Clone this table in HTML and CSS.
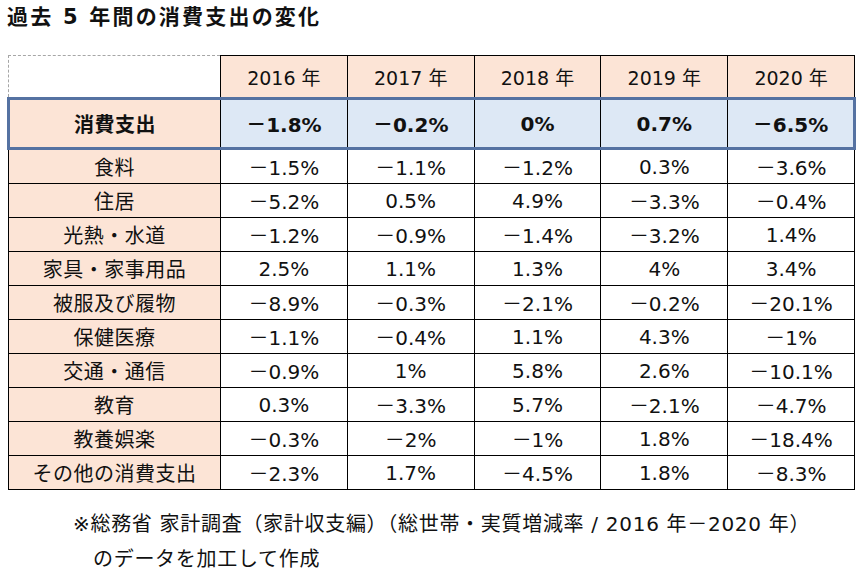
FILE: index.html
```html
<!DOCTYPE html>
<html lang="ja">
<head>
<meta charset="utf-8">
<link rel="stylesheet" href="styles.css">
</head>
<body>
<div class="page">
  <h1 class="title">過去 5 年間の消費支出の変化</h1>
  <table class="data">
    <colgroup>
      <col class="c-label">
      <col class="c-year"><col class="c-year"><col class="c-year"><col class="c-year"><col class="c-year">
    </colgroup>
    <thead>
      <tr class="head">
        <th class="corner"></th>
        <th>2016 年</th><th>2017 年</th><th>2018 年</th><th>2019 年</th><th>2020 年</th>
      </tr>
    </thead>
    <tbody>
      <tr class="total">
        <th>消費支出</th>
        <td>－1.8%</td><td>－0.2%</td><td>0%</td><td>0.7%</td><td>－6.5%</td>
      </tr>
      <tr><th>食料</th><td>－1.5%</td><td>－1.1%</td><td>－1.2%</td><td>0.3%</td><td>－3.6%</td></tr>
      <tr><th>住居</th><td>－5.2%</td><td>0.5%</td><td>4.9%</td><td>－3.3%</td><td>－0.4%</td></tr>
      <tr><th>光熱・水道</th><td>－1.2%</td><td>－0.9%</td><td>－1.4%</td><td>－3.2%</td><td>1.4%</td></tr>
      <tr><th>家具・家事用品</th><td>2.5%</td><td>1.1%</td><td>1.3%</td><td>4%</td><td>3.4%</td></tr>
      <tr><th>被服及び履物</th><td>－8.9%</td><td>－0.3%</td><td>－2.1%</td><td>－0.2%</td><td>－20.1%</td></tr>
      <tr><th>保健医療</th><td>－1.1%</td><td>－0.4%</td><td>1.1%</td><td>4.3%</td><td>－1%</td></tr>
      <tr><th>交通・通信</th><td>－0.9%</td><td>1%</td><td>5.8%</td><td>2.6%</td><td>－10.1%</td></tr>
      <tr><th>教育</th><td>0.3%</td><td>－3.3%</td><td>5.7%</td><td>－2.1%</td><td>－4.7%</td></tr>
      <tr><th>教養娯楽</th><td>－0.3%</td><td>－2%</td><td>－1%</td><td>1.8%</td><td>－18.4%</td></tr>
      <tr><th>その他の消費支出</th><td>－2.3%</td><td>1.7%</td><td>－4.5%</td><td>1.8%</td><td>－8.3%</td></tr>
    </tbody>
  </table>
  <div class="note">
    <p class="note-line">※総務省 家計調査（家計収支編）（総世帯・実質増減率 / 2016 年－2020 年）</p>
    <p class="note-line indent">のデータを加工して作成</p>
  </div>
</div>
</body>
</html>
```

FILE: styles.css
```css
html, body {
  margin: 0;
  padding: 0;
  background: #ffffff;
}

body {
  font-family: "DejaVu Sans", "Noto Sans CJK JP", sans-serif;
  color: #111111;
}

.page {
  width: 863px;
  height: 578px;
  padding: 5px 0 0 7px;
  box-sizing: border-box;
  overflow: hidden;
}

.title {
  margin: 0 0 26px 0;
  font-size: 21px;
  line-height: 24px;
  font-weight: bold;
  letter-spacing: 2.2px;
  color: #111111;
}

.data {
  border-collapse: collapse;
  width: 849px;
  table-layout: fixed;
}

.c-label { width: 212px; }

.data th,
.data td {
  border: 1px solid #000000;
  text-align: center;
  vertical-align: middle;
  padding: 0;
  font-weight: normal;
  font-size: 20px;
  height: 33px;
  white-space: nowrap;
}

.data tbody th {
  background: #fce4d6;
  letter-spacing: 0.5px;
}

.head th {
  background: #fce4d6;
  font-size: 19px;
  height: 41px;
}

.head th.corner {
  background: #ffffff;
  border-top: 1px dashed #a6a6a6;
  border-left: 1px dashed #a6a6a6;
}

.total th,
.total td {
  background: #dde8f5;
  font-weight: bold;
  border-top: 3px solid #5572a2;
  border-bottom: 3px solid #5572a2;
  height: 47px;
}

.total th {
  border-left: 3px solid #5572a2;
}

.total td:last-child {
  border-right: 3px solid #5572a2;
}

.note {
  margin: 17px 0 0 66px;
  font-size: 20px;
  letter-spacing: 0.7px;
}

.note-line {
  margin: 0;
  line-height: 35px;
}

.indent {
  padding-left: 20px;
}
```
